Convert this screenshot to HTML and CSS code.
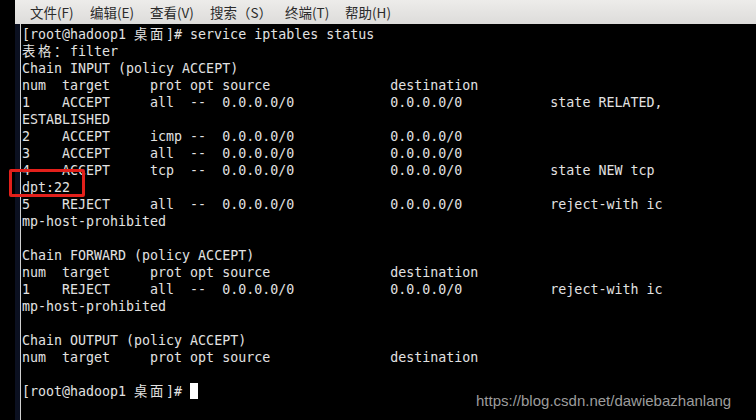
FILE: index.html
```html
<!DOCTYPE html>
<html lang="zh-CN">
<head>
    <meta charset="UTF-8">
    <meta name="viewport" content="width=device-width, initial-scale=1.0">
    <title>终端</title>
    <link rel="stylesheet" href="styles.css">
</head>
<body>
    <div class="screen">
        <div class="edge"></div>
        <div class="window">
            <!-- menu bar -->
            <div class="menubar">
                <span class="menu-item">文件(F)</span>
                <span class="menu-item">编辑(E)</span>
                <span class="menu-item">查看(V)</span>
                <span class="menu-item wide">搜索（S）</span>
                <span class="menu-item">终端(T)</span>
                <span class="menu-item">帮助(H)</span>
            </div>
            <div class="body-row">
                <div class="gutter"></div>
                <div class="divider"></div>
<pre class="terminal">[root@hadoop1 <span class="cjk">桌面</span>]# service iptables status
<span class="cjk">表格：</span>filter
Chain INPUT (policy ACCEPT)
num  target     prot opt source               destination
1    ACCEPT     all  --  0.0.0.0/0            0.0.0.0/0           state RELATED,
ESTABLISHED
2    ACCEPT     icmp --  0.0.0.0/0            0.0.0.0/0
3    ACCEPT     all  --  0.0.0.0/0            0.0.0.0/0
4    ACCEPT     tcp  --  0.0.0.0/0            0.0.0.0/0           state NEW tcp
dpt:22
5    REJECT     all  --  0.0.0.0/0            0.0.0.0/0           reject-with ic
mp-host-prohibited

Chain FORWARD (policy ACCEPT)
num  target     prot opt source               destination
1    REJECT     all  --  0.0.0.0/0            0.0.0.0/0           reject-with ic
mp-host-prohibited

Chain OUTPUT (policy ACCEPT)
num  target     prot opt source               destination

[root@hadoop1 <span class="cjk">桌面</span>]# <span class="cursor"></span></pre>
            </div>
        </div>

        <!-- annotation + watermark lie over the terminal -->
        <div class="highlight"></div>
        <div class="watermark">https://blog.csdn.net/dawiebazhanlang</div>
    </div>
</body>
</html>
```

FILE: styles.css
```css
body {
    margin: 0;
    background-color: #000;
}

.screen {
    position: relative;
    width: 756px;
    height: 420px;
    display: flex;
    overflow: hidden;
    background-color: #000;
}

.edge {
    width: 15px;
    flex-shrink: 0;
    background-color: #000;
}

.window {
    flex: 1;
    display: flex;
    flex-direction: column;
}

.menubar {
    height: 24px;
    display: flex;
    align-items: center;
    padding-left: 15px;
    background: linear-gradient(#edecea, #dddcda);
    font-family: "Noto Sans CJK SC", "DejaVu Sans", sans-serif;
    font-size: 13.5px;
    color: #2b2b2b;
}

.menu-item {
    width: 60px;
    flex-shrink: 0;
    white-space: nowrap;
}

.menu-item.wide {
    width: 75px;
}

.body-row {
    flex: 1;
    display: flex;
}

.gutter {
    width: 5px;
    background-color: #0b1020;
}

.divider {
    width: 1px;
    background-color: #d0d0d0;
}

.terminal {
    margin: 0;
    padding: 2px 0 0 1px;
    font-family: "DejaVu Sans Mono", monospace;
    font-size: 13.3px;
    line-height: 17px;
    color: #e2e2e2;
}

/* CJK chars take two cells in the terminal */
.cjk {
    font-family: "Noto Sans CJK SC", sans-serif;
    font-size: 13.3px;
    line-height: 0;
    letter-spacing: 2.7px;
}

.cursor {
    display: inline-block;
    width: 8px;
    height: 16px;
    background-color: #fff;
    vertical-align: -3px;
}

.highlight {
    position: absolute;
    left: 9px;
    top: 169px;
    width: 76px;
    height: 28px;
    box-sizing: border-box;
    border: 3px solid #e3201b;
    border-radius: 2px;
}

.watermark {
    position: absolute;
    left: 476px;
    top: 392px;
    font-family: "Liberation Sans", Arial, sans-serif;
    font-size: 15px;
    color: #9c9c9c;
}
```
